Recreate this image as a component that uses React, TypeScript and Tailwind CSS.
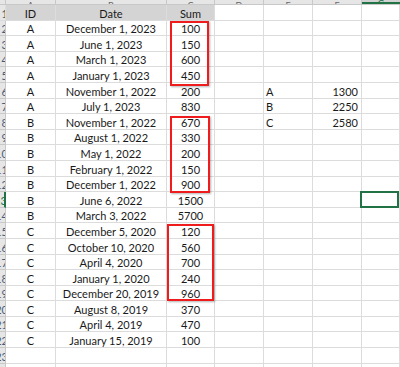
const rows = [
  ["A", "December 1, 2023", "100"],
  ["A", "June 1, 2023", "150"],
  ["A", "March 1, 2023", "600"],
  ["A", "January 1, 2023", "450"],
  ["A", "November 1, 2022", "200"],
  ["A", "July 1, 2023", "830"],
  ["B", "November 1, 2022", "670"],
  ["B", "August 1, 2022", "330"],
  ["B", "May 1, 2022", "200"],
  ["B", "February 1, 2022", "150"],
  ["B", "December 1, 2022", "900"],
  ["B", "June 6, 2022", "1500"],
  ["B", "March 3, 2022", "5700"],
  ["C", "December 5, 2020", "120"],
  ["C", "October 10, 2020", "560"],
  ["C", "April 4, 2020", "700"],
  ["C", "January 1, 2020", "240"],
  ["C", "December 20, 2019", "960"],
  ["C", "August 8, 2019", "370"],
  ["C", "April 4, 2019", "470"],
  ["C", "January 15, 2019", "100"],
  ["", "", ""],
  ["", "", ""],
];

const totals: Record<number, [string, string]> = {
  4: ["A", "1300"],
  5: ["B", "2250"],
  6: ["C", "2580"],
};

const selectedRow = 11;

const cell = "h-full shrink-0 border-r border-b border-[#dcdcdc] flex items-end pb-[1px]";

export default function App() {
  return (
    <div className="relative h-[367px] w-[400px] overflow-hidden bg-white font-['Lato','Liberation_Sans',sans-serif] text-[11px] leading-none text-[#1a1a1a]">
      {/* Column letters (cut off at top) */}
      <div className="flex h-[5px] border-b border-[#c8c8c8] bg-[#e6e6e6] text-[9px] text-[#666]">
        <div className="w-[6px] shrink-0 border-r border-[#c8c8c8]" />
        {[
          ["A", "w-[50px]"],
          ["B", "w-[111px]"],
          ["C", "w-[48px]"],
          ["D", "w-[49px]"],
          ["E", "w-[49px]"],
          ["F", "w-[49px]"],
        ].map(([l, w]) => (
          <div key={l} className={`${w} flex shrink-0 items-end justify-center overflow-hidden border-r border-[#c8c8c8]`}>
            <span className="-mb-[8px] block leading-[12px]">{l}</span>
          </div>
        ))}
        <div className="flex flex-1 items-end justify-center overflow-hidden border-b-2 border-[#217346] bg-[#d2d2d2] text-[#217346]">
          <span className="-mb-[8px] block leading-[12px]">G</span>
        </div>
      </div>

      {/* Header row */}
      <div className="flex h-[15.6px]">
        <div className={`${cell} w-[6px] justify-end overflow-hidden bg-[#e6e6e6] border-[#c8c8c8] text-[#555]`}>
          <span className="-mr-[3px]">1</span>
        </div>
        <div className={`${cell} w-[50px] justify-center bg-[#d4d4d4] border-[#c4c4c4]`}>ID</div>
        <div className={`${cell} w-[111px] justify-center bg-[#d4d4d4] border-[#c4c4c4]`}>Date</div>
        <div className={`${cell} w-[48px] justify-center bg-[#d4d4d4] border-[#c4c4c4]`}>Sum</div>
        <div className={`${cell} w-[49px]`} />
        <div className={`${cell} w-[49px]`} />
        <div className={`${cell} w-[49px]`} />
        <div className={`${cell} flex-1`} />
      </div>

      {rows.map((r, i) => {
        const t = totals[i];
        const sel = i === selectedRow;
        return (
          <div key={i} className="flex h-[15.6px]">
            <div
              className={`${cell} w-[6px] justify-end overflow-hidden bg-[#e6e6e6] border-b-[#c8c8c8] ${
                sel ? "border-r-2 border-r-[#217346] text-[#217346]" : "border-r-[#c8c8c8] text-[#4a5a78]"
              }`}
            >
              <span className="-mr-[3px]">{i + 2}</span>
            </div>
            <div className={`${cell} w-[50px] justify-center`}>{r[0]}</div>
            <div className={`${cell} w-[111px] justify-center whitespace-nowrap`}>{r[1]}</div>
            <div className={`${cell} w-[48px] justify-center`}>{r[2]}</div>
            <div className={`${cell} w-[49px]`} />
            <div className={`${cell} w-[49px] pl-[2px]`}>{t ? t[0] : ""}</div>
            <div className={`${cell} w-[49px] justify-end pr-[3px]`}>{t ? t[1] : ""}</div>
            <div className={`${cell} relative flex-1`}>
              {sel && <div className="absolute -left-[2px] -top-[1px] right-0 -bottom-[1px] border-2 border-[#217346]" />}
            </div>
          </div>
        );
      })}

      {/* Red highlight boxes */}
      <div className="absolute left-[170px] top-[21px] h-[65px] w-[39px] border-2 border-[#ee1c1c] shadow-[1px_1px_2px_rgba(0,0,0,0.3)]" />
      <div className="absolute left-[170px] top-[116px] h-[77px] w-[40px] border-2 border-[#ee1c1c] shadow-[1px_1px_2px_rgba(0,0,0,0.3)]" />
      <div className="absolute left-[167px] top-[224px] h-[77px] w-[47px] border-2 border-[#ee1c1c] shadow-[1px_1px_2px_rgba(0,0,0,0.3)]" />
    </div>
  );
}
